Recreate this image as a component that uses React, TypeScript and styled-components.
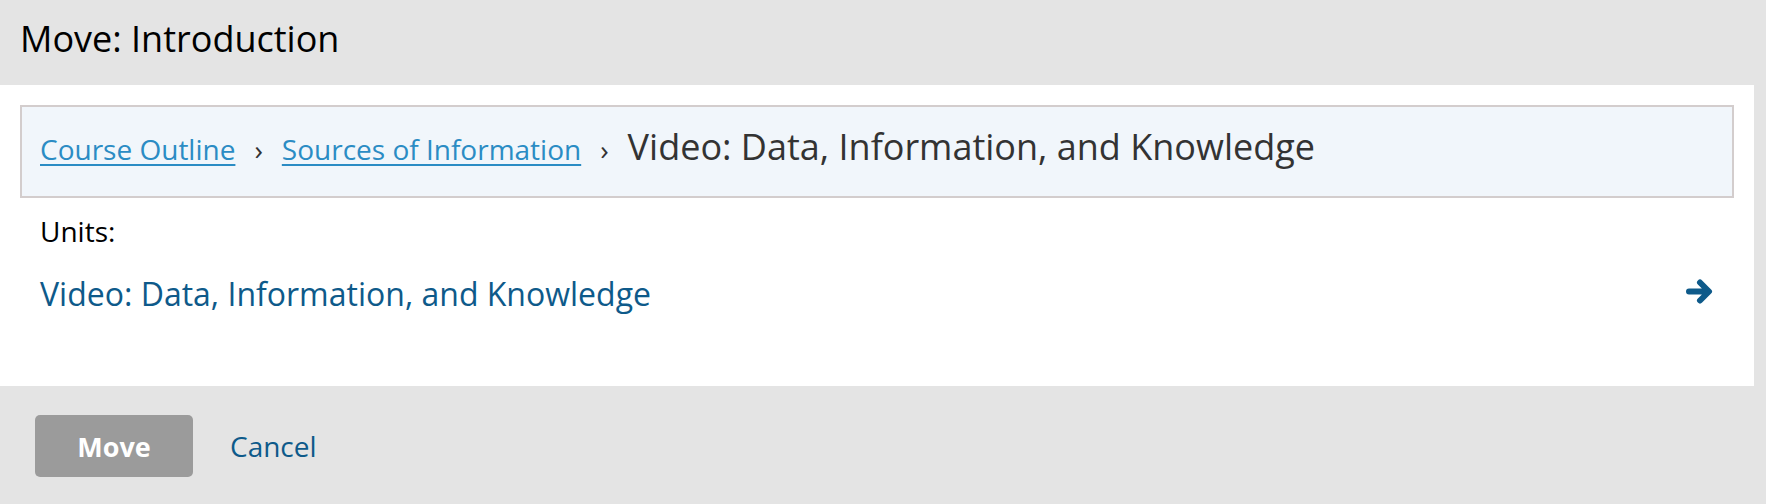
import React from 'react';
import styled, { createGlobalStyle } from 'styled-components';

const GlobalStyle = createGlobalStyle`
  html, body {
    margin: 0;
    padding: 0;
  }
  body {
    background-color: #e4e4e4;
    font-family: "Open Sans", "Liberation Sans", sans-serif;
    color: #000;
  }
`;

const Page = styled.div`
  min-height: 100vh;
  background-color: #e4e4e4;
  display: flex;
  flex-direction: column;
`;

const Header = styled.div`
  padding: 14px 20px 22px;
`;

const Title = styled.h1`
  margin: 0;
  font-size: 36px;
  font-weight: 400;
  line-height: normal;
  color: #000;
`;

const Body = styled.div`
  background-color: #fff;
  margin-right: 12px;
  padding: 20px 20px 70px;
`;

const Breadcrumb = styled.nav`
  display: flex;
  align-items: baseline;
  background-color: #f1f6fb;
  border: 2px solid #d3cdcd;
  padding: 13px 18px 20px;
  line-height: 54px;
`;

const CrumbLink = styled.a`
  font-size: 28px;
  color: #2b8cc4;
  text-decoration: underline;
  text-underline-offset: 4px;
  text-decoration-thickness: 2px;
  cursor: pointer;
`;

const Separator = styled.span`
  font-size: 28px;
  color: #333;
  margin: 0 19px;
`;

const CurrentCrumb = styled.span`
  font-size: 36px;
  color: #333;
`;

const UnitsLabel = styled.div`
  margin: 14px 20px 0;
  font-size: 28px;
  line-height: 38px;
  color: #000;
`;

const UnitRow = styled.div`
  display: flex;
  align-items: center;
  justify-content: space-between;
  margin-top: 21px;
  padding: 0 21px 0 20px;
`;

const UnitLink = styled.a`
  font-size: 32px;
  line-height: 45px;
  color: #0e5a8a;
  text-decoration: none;
  cursor: pointer;
`;

const ArrowIcon = styled.svg`
  width: 27px;
  height: 27px;
  margin-bottom: 5px;
  flex-shrink: 0;
`;

const Footer = styled.div`
  display: flex;
  align-items: center;
  gap: 37px;
  padding: 29px 35px 25px;
`;

const MoveButton = styled.button`
  width: 158px;
  height: 62px;
  border: none;
  border-radius: 5px;
  background-color: #9b9b9b;
  color: #fff;
  font-family: "Open Sans", "Liberation Sans", sans-serif;
  font-size: 27px;
  font-weight: 700;
  cursor: default;
`;

const CancelLink = styled.a`
  font-size: 28px;
  color: #0e5a8a;
  text-decoration: none;
  cursor: pointer;
`;

const App: React.FC = () => {
  return (
    <Page>
      <GlobalStyle />
      <Header>
        <Title>Move: Introduction</Title>
      </Header>
      <Body>
        <Breadcrumb>
          <CrumbLink>Course Outline</CrumbLink>
          <Separator>›</Separator>
          <CrumbLink>Sources of Information</CrumbLink>
          <Separator>›</Separator>
          <CurrentCrumb>Video: Data, Information, and Knowledge</CurrentCrumb>
        </Breadcrumb>
        <UnitsLabel>Units:</UnitsLabel>
        <UnitRow>
          <UnitLink>Video: Data, Information, and Knowledge</UnitLink>
          <ArrowIcon viewBox="0 0 27 27" aria-hidden="true">
            <path
              d="M3 13.5 H22 M14 4.5 L23 13.5 L14 22.5"
              fill="none"
              stroke="#0e5a8a"
              strokeWidth="6"
              strokeLinecap="round"
              strokeLinejoin="round"
            />
          </ArrowIcon>
        </UnitRow>
      </Body>
      <Footer>
        <MoveButton>Move</MoveButton>
        <CancelLink>Cancel</CancelLink>
      </Footer>
    </Page>
  );
};

export default App;
